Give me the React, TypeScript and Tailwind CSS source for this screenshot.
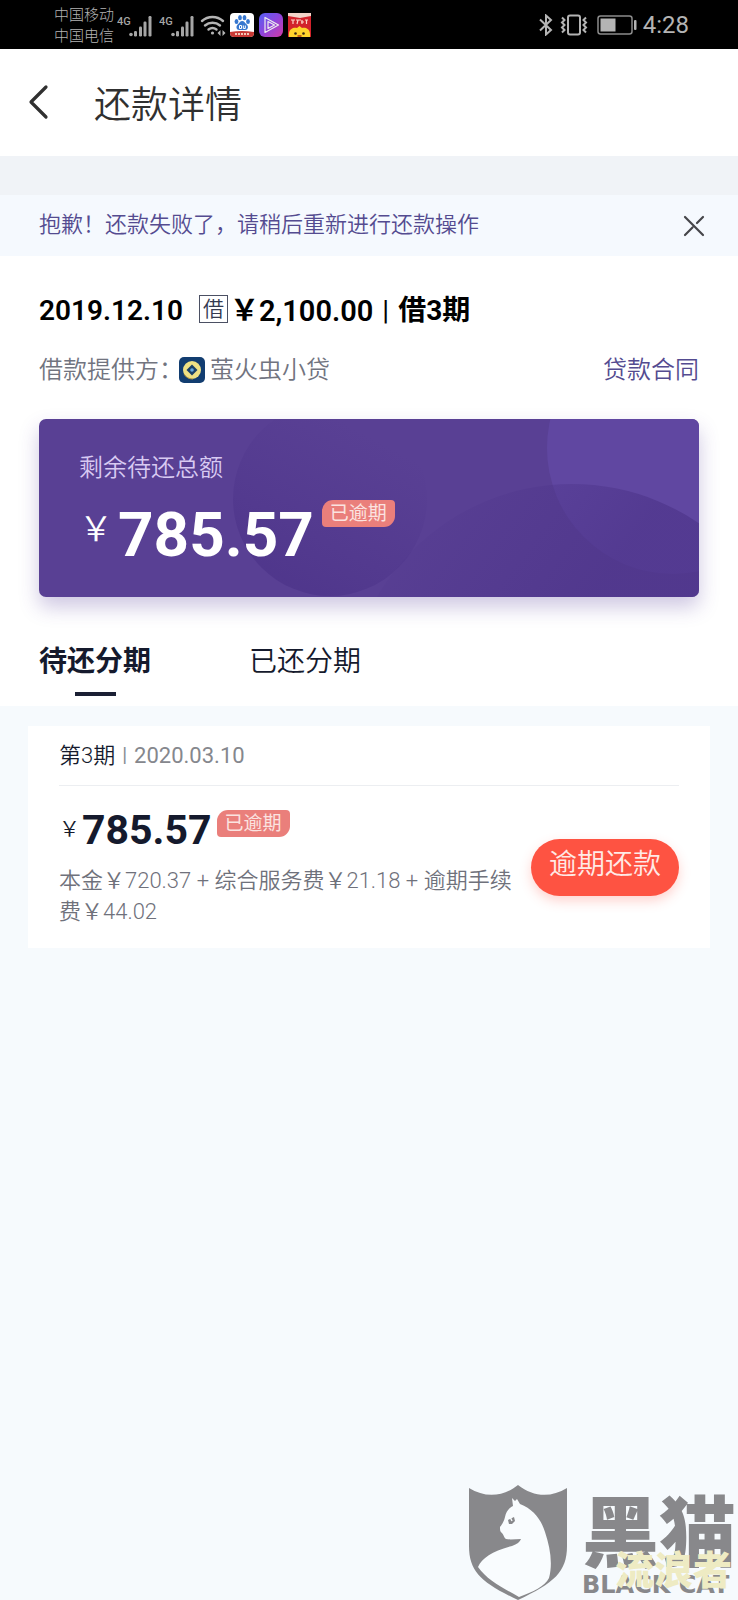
import { useState } from "react";

function SignalIcon() {
  return (
    <svg width="36" height="26" viewBox="0 0 36 26" fill="#a6a6a6" aria-hidden="true">
      <text x="0" y="13" fontSize="11" fontWeight="500" fontFamily="Roboto, sans-serif">4G</text>
      <circle cx="14" cy="22.500" r="1.800" />
      <rect x="17" y="19" width="3" height="5.500" rx="1.200" />
      <rect x="22" y="14.500" width="3" height="10" rx="1.200" />
      <rect x="26.500" y="9.500" width="3" height="15" rx="1.200" />
      <rect x="31.500" y="4" width="3" height="20.500" rx="1.200" />
    </svg>
  );
}

function StatusBar() {
  return (
    <div className="flex h-[49px] items-center bg-black pl-[54px] pr-[49px] text-[#b4b4b4]">
      <div className="pt-[2px] text-[15px] leading-[21px] font-light">
        <div>中国移动</div>
        <div>中国电信</div>
      </div>
      <div className="ml-[3px] flex items-center gap-[6px]">
        <SignalIcon />
        <SignalIcon />
      </div>
      <svg className="ml-[5px]" width="26" height="26" viewBox="0 0 26 26" fill="none" stroke="#b4b4b4" strokeWidth="2.400" strokeLinecap="round" aria-hidden="true">
        <path d="M2 9a16 16 0 0 1 21 0M5 13.500a11.500 11.500 0 0 1 15 0M8.500 17.500a6.500 6.500 0 0 1 8 0" />
        <circle cx="12.500" cy="21" r="1.600" fill="#b4b4b4" stroke="none" />
        <path d="M20.500 18v6l-3-3zM22.500 18v6l3-3z" fill="#b4b4b4" stroke="none" />
      </svg>
      <svg className="ml-[4px]" width="24" height="24" viewBox="0 0 24 24" aria-hidden="true">
        <clipPath id="paw-tile"><rect width="24" height="24" rx="4" /></clipPath>
        <g clipPath="url(#paw-tile)">
          <rect width="24" height="24" fill="#fff" />
          <g fill="#3777cf">
            <ellipse cx="6.500" cy="8.500" rx="1.900" ry="2.500" />
            <ellipse cx="10" cy="4.700" rx="1.900" ry="2.600" />
            <ellipse cx="14.500" cy="4.700" rx="1.900" ry="2.600" />
            <ellipse cx="18" cy="8.500" rx="1.900" ry="2.500" />
            <path d="M12.200 8c2 0 3 2.200 4.500 3.500 2.200 2 1.300 5.500-1.500 5.500h-6c-2.800 0-3.700-3.500-1.500-5.500C9.200 10.200 10.200 8 12.200 8z" />
          </g>
          <path d="M9.500 12.500h2v3h-2zM13.300 12.500v3h2v-3" fill="none" stroke="#fff" />
          <path d="M0 19q12-2 24 0v5H0z" fill="#c93a35" />
          <path d="M5 21h14" stroke="#f2c8b8" strokeWidth="2" strokeDasharray="2 1" />
        </g>
      </svg>
      <svg className="ml-[5px]" width="24" height="24" viewBox="0 0 24 24" aria-hidden="true">
        <defs>
          <linearGradient id="play-tile" x1="0" y1="0" x2="1" y2="1">
            <stop offset="0" stopColor="#5560f2" />
            <stop offset=".5" stopColor="#8f45dc" />
            <stop offset="1" stopColor="#d13aa4" />
          </linearGradient>
        </defs>
        <rect width="24" height="24" rx="6" fill="url(#play-tile)" />
        <path d="M6 4.500v15l13.500-7.500zM9 8.500v7l6.500-3.500z" fill="none" stroke="#eee" strokeWidth="1.200" strokeLinejoin="round" />
      </svg>
      <svg className="ml-[5px]" width="23" height="24" viewBox="0 0 23 24" aria-hidden="true">
        <rect width="23" height="24" fill="#d2222b" />
        <path d="M0 0h23v3l-11 2L0 3z" fill="#f3d4c9" />
        <path d="M3 7h4M5 7v4M8 7h5M10 7l-1 4M14 7v4M13 9h3M17 7h3M18.500 7v4" stroke="#fbd4c8" strokeWidth="1.200" />
        <path d="M1 24c-1-8 4-10 8-9l2.500-2 2.500 2c4-1 9 1 8 9z" fill="#ffd42c" />
        <circle cx="7.500" cy="20.500" r="1.300" fill="#3b2a16" />
        <circle cx="15.500" cy="20.500" r="1.300" fill="#3b2a16" />
        <path d="M9.500 23h4" stroke="#b03a10" strokeWidth="1.500" />
      </svg>
      <svg className="ml-auto" width="14" height="22" viewBox="0 0 14 22" fill="none" stroke="#b4b4b4" strokeWidth="2" aria-hidden="true">
        <path d="M1 5.500l11 10.500-5 4.500V1.500l5 4.500L1 16.500" />
      </svg>
      <svg className="ml-[7px]" width="28" height="22" viewBox="0 0 28 22" fill="none" stroke="#b4b4b4" strokeWidth="2" aria-hidden="true">
        <rect x="8" y="1.500" width="12" height="19" rx="2" />
        <path d="M2 3.500l2.500 2.500L2 8.500 4.500 11 2 13.500 4.500 16 2 18.500M26 3.500L23.500 6 26 8.500 23.500 11 26 13.500 23.500 16l2.500 2.500" strokeWidth="2" />
      </svg>
      <svg className="ml-[9px]" width="40" height="20" viewBox="0 0 40 20" aria-hidden="true">
        <rect x="1" y="1" width="34" height="18" rx="2.500" fill="none" stroke="#8c8c8c" strokeWidth="1.500" />
        <rect x="3.500" y="3.500" width="15" height="13" fill="#b4b4b4" />
        <rect x="37" y="5" width="2.500" height="10" rx="1" fill="#b4b4b4" />
      </svg>
      <span className="ml-[6px] text-[24px] leading-[28px] font-normal">4:28</span>
    </div>
  );
}

function OverdueBadge() {
  return (
    <span className="rounded-sm rounded-tl-[11px] rounded-br-[11px] bg-[#ea7f7b] px-[8px] text-[19px] leading-[27px] font-normal text-[#fbe3e0]">
      已逾期
    </span>
  );
}

function CatShield() {
  return (
    <svg width="98" height="115" viewBox="0 0 98 115" aria-hidden="true">
      <path d="M0 3c16 10 34 9 49-3 15 12 33 13 49 3v58c0 26-13 37-49 54C13 98 0 87 0 61z" fill="#88888b" />
      <path
        d="M43 13l3 3 2-2 3 5c13 5 21 15 25 28 5 15 8 31 4 46-4 8-16 14-30 19C34 103 18 95 9 82c4-9 15-16 34-21 5-2 8-4 9-7-5 0-11 1-15 0-2-1-2-4-4-6-2-1-2-3-2-6 3-4 4-6 5-10 1-6 4-9 8-11z"
        fill="#f9fcfe"
      />
      <path d="M39 35l6-3 1 4-3 3-3 0z" fill="#88888b" />
      <path d="M41.500 33l1.500 3" stroke="#f9fcfe" strokeWidth="1.400" />
    </svg>
  );
}

function Watermark() {
  return (
    <div className="mt-auto ml-auto flex items-end pr-[2px]">
      <CatShield />
      <div className="relative ml-[15px] text-[#88888b]">
        <div className="text-[77px] leading-[76px] font-black">黑猫</div>
        <div className="pb-[3px] font-['DejaVu_Sans',sans-serif] text-[24px] leading-[24px] font-bold">BLACK CAT</div>
        <div className="absolute right-[4px] bottom-[8px] text-[39px] leading-[42px] font-black whitespace-nowrap text-[#eeebc3]">
          流浪者
        </div>
      </div>
    </div>
  );
}

export default function App() {
  const [noticeOpen, setNoticeOpen] = useState(true);
  const [tab, setTab] = useState("due");

  return (
    <div className="flex min-h-screen flex-col bg-[#f6fafd] font-[Roboto,'Noto_Sans_CJK_SC',sans-serif] font-[350] text-[#151a2d]">
      <StatusBar />
      <header className="flex h-[107px] items-center bg-white pl-[28px]">
        <button aria-label="返回" className="mb-[2px]">
          <svg width="22" height="36" viewBox="0 0 22 36" fill="none" stroke="#303030" strokeWidth="3.200" strokeLinecap="round" strokeLinejoin="round">
            <path d="M18 3L3 18l15 15" />
          </svg>
        </button>
        <h1 className="ml-[44px] pt-[6px] text-[37px] leading-[48px] font-[350] text-[#303030]">还款详情</h1>
      </header>
      <div className="h-[39px] bg-[#f0f3f7]" />
      {noticeOpen && (
        <div className="flex h-[61px] items-center justify-between bg-[#f5f9fe] pr-[33px] pl-[39px]">
          <p className="pb-[2px] text-[22px] leading-[30px] text-[#544b90]">抱歉！还款失败了，请稍后重新进行还款操作</p>
          <button aria-label="关闭" onClick={() => setNoticeOpen(false)}>
            <svg width="22" height="22" viewBox="0 0 22 22" stroke="#454549" strokeWidth="2.200" strokeLinecap="round">
              <path d="M2 2l18 18M20 2l-6 6M9.500 12.500L2 20" />
            </svg>
          </button>
        </div>
      )}

      <main className="bg-white px-[39px] pt-[37px]">
        <h2 className="flex items-center text-[28px] leading-[36px] font-bold text-black">
          <span className="font-semibold">2019.12.10</span>
          <span className="mb-[4px] ml-[16px] border border-[#4b5063] px-[3px] text-[21px] leading-[26px] font-[350] text-[#343a50]">借</span>
          <span className="ml-[2px] text-[29px] font-semibold">￥2,100.00</span>
          <span className="mx-[9px] font-normal">|</span>
          <span>借3期</span>
        </h2>
        <div className="mt-[24px] flex items-center text-[24px] leading-[34px] text-[#71747f]">
          <span>借款提供方：</span>
          <svg className="-ml-[4px]" width="26" height="26" viewBox="0 0 26 26" aria-hidden="true">
            <rect width="26" height="26" rx="5" fill="#123d70" />
            <circle cx="13" cy="13" r="9" fill="#efe184" />
            <path d="M13 7.500l5.500 5.500-5.500 5.500L7.500 13z" fill="#1a4068" />
            <circle cx="13" cy="13" r="1.800" fill="#65a9df" />
            <path d="M5 17q3 5 9 5" stroke="#b79a3c" fill="none" />
          </svg>
          <span className="ml-[5px]">萤火虫小贷</span>
          <a href="#contract" className="ml-auto text-[#544b90]">贷款合同</a>
        </div>

        <section className="relative mt-[32px] overflow-hidden rounded-[7px] bg-[#594094] px-[40px] pt-[33px] pb-[29px] shadow-[0_10px_20px_rgba(80,55,150,0.28)]">
          <svg className="absolute inset-0 h-full w-full" viewBox="0 0 660 178" preserveAspectRatio="xMaxYMid slice" aria-hidden="true">
            <defs>
              <linearGradient id="orb-shade" x1="0.850" y1="0.250" x2="0.450" y2="1">
                <stop offset="0" stopColor="#4e358b" stopOpacity="0" />
                <stop offset="1" stopColor="#4c3389" />
              </linearGradient>
              <linearGradient id="hill-shade" x1="0.100" y1="0" x2="0.500" y2="0.300">
                <stop offset="0" stopColor="#4e358b" stopOpacity="0" />
                <stop offset="1" stopColor="#4e358b" />
              </linearGradient>
            </defs>
            <circle cx="291" cy="80" r="97" fill="url(#orb-shade)" opacity="0.700" />
            <circle cx="634" cy="29" r="126" fill="#6047a1" />
            <circle cx="533" cy="290" r="225" fill="url(#hill-shade)" opacity="0.700" />
          </svg>
          <div className="relative">
            <p className="text-[24px] leading-[32px] text-[#d8caf2]">剩余待还总额</p>
            <div className="mt-[16px] flex items-start text-white">
              <span className="mt-[11px] text-[34px] leading-[36px]">￥</span>
              <span className="mt-[2px] ml-[5px] text-[62px] leading-[66px] font-bold">785.57</span>
              <span className="ml-[8px] flex">
                <OverdueBadge />
              </span>
            </div>
          </div>
        </section>

        <div role="tablist" className="mt-[45px] flex gap-[98px] text-[28px] leading-[40px]">
          <button
            role="tab"
            aria-selected={tab === "due"}
            onClick={() => setTab("due")}
            className="flex flex-col items-center aria-selected:font-bold"
          >
            待还分期
            {tab === "due" && <span className="mt-[10px] h-[4px] w-[41px] bg-[#1b2034]" />}
          </button>
          <button
            role="tab"
            aria-selected={tab === "paid"}
            onClick={() => setTab("paid")}
            className="flex flex-col items-center aria-selected:font-bold"
          >
            已还分期
            {tab === "paid" && <span className="mt-[10px] h-[4px] w-[41px] bg-[#1b2034]" />}
          </button>
        </div>
        <div className="h-[10px]" />
      </main>

      <article className="mx-[28px] mt-[20px] bg-white px-[31px] pb-[21px]">
        <div className="flex items-center border-b border-[#eceef1] py-[14px] text-[22px] leading-[31px]">
          <span>第3期</span>
          <span className="mx-[7px] text-[20px] font-normal text-[#888b93]">|</span>
          <span className="font-normal text-[#85878d]">2020.03.10</span>
        </div>
        <div className="flex items-center justify-between">
          <div>
            <div className="mt-[24px] flex items-start">
              <span className="mt-[7px] text-[21px] leading-[24px]">￥</span>
              <span className="ml-[2px] text-[41px] leading-[41px] font-bold">785.57</span>
              <span className="ml-[5px] flex">
                <OverdueBadge />
              </span>
            </div>
            <p className="mt-[14px] max-w-[460px] text-[22px] leading-[31px] text-[#6f717b]">
              本金￥720.37 + 综合服务费￥21.18 + 逾期手续费￥44.02
            </p>
          </div>
          <button className="mt-[22px] shrink-0 rounded-full bg-[#fe5342] px-[18px] pt-[6px] pb-[11px] text-[28px] leading-[40px] text-[#ffeae6] shadow-[0_5px_12px_rgba(254,83,66,0.25)]">
            逾期还款
          </button>
        </div>
      </article>

      <Watermark />
    </div>
  );
}
